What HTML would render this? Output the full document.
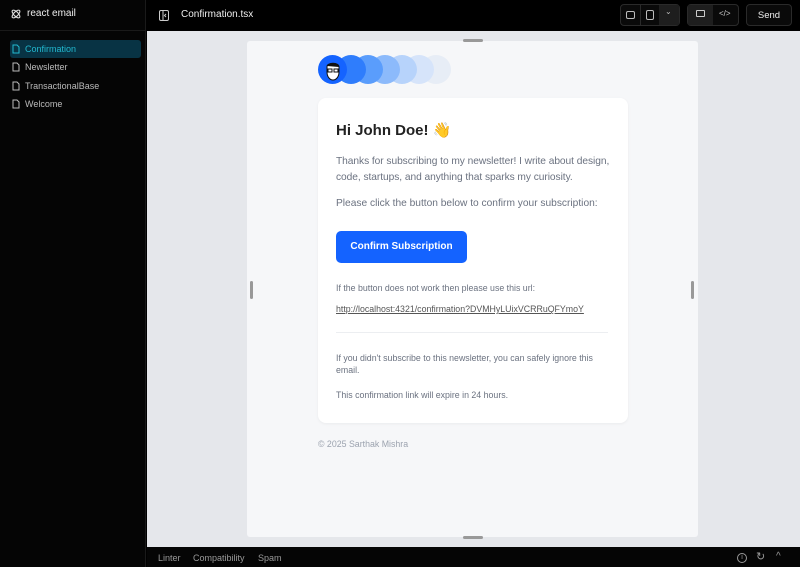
<!DOCTYPE html>
<html><head><meta charset="utf-8"><style>
*{margin:0;padding:0;box-sizing:border-box}
body{width:800px;height:567px;background:#000;font-family:"Liberation Sans",sans-serif;position:relative;overflow:hidden}
.a{position:absolute;white-space:nowrap}
.side{left:0;top:0;width:146px;height:567px;background:#050505;border-right:1px solid #1a1a1a}
.it{position:absolute;left:10px;width:131px;height:18px;font-size:9px;color:#bbb;line-height:18px;padding-left:15px}
.it svg{position:absolute;left:2px;top:4px}
.p{color:#6b7280;font-size:10.2px}
.btn{border:1px solid #2a2a2a;border-radius:4px}
</style></head><body>
<div class="a side"></div>
<div class="a" style="left:0;top:30px;width:146px;height:1px;background:#1a1a1a"></div>
<svg class="a" style="left:10px;top:8px" width="12" height="12" viewBox="0 0 12 12" fill="none" stroke="#ddd" stroke-width="1.1"><ellipse cx="6" cy="6" rx="5" ry="2.2" transform="rotate(45 6 6)"/><ellipse cx="6" cy="6" rx="5" ry="2.2" transform="rotate(-45 6 6)"/></svg>
<div class="a" style="left:27px;top:8px;font-size:10px;color:#eee">react email</div>
<div class="it" style="top:40px;background:#083344;border-radius:3px;color:#22b8cf"><svg width="8" height="10" viewBox="0 0 8 10" fill="none" stroke="#22b8cf"><path d="M1 1h4l2 2v6H1z"/></svg>Confirmation</div>
<div class="it" style="top:58px"><svg width="8" height="10" viewBox="0 0 8 10" fill="none" stroke="#bbb"><path d="M1 1h4l2 2v6H1z"/></svg>Newsletter</div>
<div class="it" style="top:77px"><svg width="8" height="10" viewBox="0 0 8 10" fill="none" stroke="#bbb"><path d="M1 1h4l2 2v6H1z"/></svg>TransactionalBase</div>
<div class="it" style="top:95px"><svg width="8" height="10" viewBox="0 0 8 10" fill="none" stroke="#bbb"><path d="M1 1h4l2 2v6H1z"/></svg>Welcome</div>
<svg class="a" style="left:159px;top:10px" width="10" height="11" viewBox="0 0 10 11" fill="none" stroke="#ccc"><rect x="0.5" y="0.5" width="9" height="10" rx="1.5"/><path d="M4 1v9M7 4l-1.5 1.5L7 7"/></svg>
<div class="a" style="left:181px;top:9px;font-size:10px;color:#eee">Confirmation.tsx</div>
<div class="a btn" style="left:620px;top:4px;width:60px;height:22px;background:#0a0a0a"></div>
<div class="a" style="left:659px;top:5px;width:20px;height:20px;background:#1e1e1e"></div>
<div class="a" style="left:640px;top:5px;width:1px;height:20px;background:#2a2a2a"></div>
<div class="a" style="left:626px;top:11px;width:9px;height:8px;border:1px solid #bbb;border-radius:2px"></div>
<div class="a" style="left:646px;top:10px;width:8px;height:10px;border:1px solid #bbb;border-radius:2px"></div>
<div class="a" style="left:665px;top:7px;font-size:8px;color:#bbb">⌄</div>
<div class="a btn" style="left:687px;top:4px;width:52px;height:22px;background:#0a0a0a"></div>
<div class="a" style="left:688px;top:5px;width:25px;height:20px;background:#1e1e1e"></div>
<div class="a" style="left:696px;top:10px;width:9px;height:7px;border:1px solid #ccc;border-radius:1px"></div>
<div class="a" style="left:719px;top:9px;font-size:8px;color:#ccc">&lt;/&gt;</div>
<div class="a btn" style="left:746px;top:4px;width:46px;height:22px;background:#0a0a0a;color:#eee;font-size:9.5px;text-align:center;line-height:21px">Send</div>
<div class="a" style="left:147px;top:31px;width:653px;height:516px;background:#e5e7eb"></div>
<div class="a" style="left:247px;top:41px;width:451px;height:496px;background:#f6f7f9;border-radius:3px"></div>
<div class="a" style="left:463px;top:39px;width:20px;height:3px;background:#999;border-radius:2px"></div>
<div class="a" style="left:463px;top:536px;width:20px;height:3px;background:#999;border-radius:2px"></div>
<div class="a" style="left:250px;top:281px;width:3px;height:18px;background:#999;border-radius:2px"></div>
<div class="a" style="left:691px;top:281px;width:3px;height:18px;background:#999;border-radius:2px"></div>
<div class="a" style="left:421px;top:55px;width:30px;height:29px;border-radius:50%;background:#e7edf6"></div>
<div class="a" style="left:404px;top:55px;width:30px;height:29px;border-radius:50%;background:#d6e4fa"></div>
<div class="a" style="left:387px;top:55px;width:30px;height:29px;border-radius:50%;background:#b7d3fb"></div>
<div class="a" style="left:370px;top:55px;width:30px;height:29px;border-radius:50%;background:#8cbafb"></div>
<div class="a" style="left:353px;top:55px;width:30px;height:29px;border-radius:50%;background:#5a9dfc"></div>
<div class="a" style="left:336px;top:55px;width:30px;height:29px;border-radius:50%;background:#2f7dfc"></div>
<div class="a" style="left:318px;top:55px;width:29px;height:29px;border-radius:50%;background:#1463ff"></div>
<svg class="a" style="left:322px;top:58px" width="22" height="24" viewBox="0 0 22 24" fill="#fff" stroke="#111" stroke-width="1"><path d="M5 9c0-5 12-5 12 0v5c0 5-3 8-6 8s-6-3-6-8z"/><path d="M5 8c1-3 11-4 12 1" fill="#111"/><rect x="6" y="11" width="4" height="3" fill="none"/><rect x="12" y="11" width="4" height="3" fill="none"/></svg>
<div class="a" style="left:318px;top:98px;width:310px;height:325px;background:#fff;border-radius:8px;box-shadow:0 1px 3px rgba(0,0,0,.05)"></div>
<div class="a" style="left:336px;top:121px;font-size:15px;font-weight:bold;color:#222">Hi John Doe! <span style="font-family:'DejaVu Sans',sans-serif;color:#f5b642;font-weight:normal">👋</span></div>
<div class="a p" style="left:336px;top:154px;line-height:16px;letter-spacing:-0.05px">Thanks for subscribing to my newsletter! I write about design,<br>code, startups, and anything that sparks my curiosity.</div>
<div class="a p" style="left:336px;top:198px">Please click the button below to confirm your subscription:</div>
<div class="a" style="left:336px;top:231px;width:131px;height:32px;background:#1463ff;border-radius:5px;color:#fff;font-size:10px;font-weight:bold;text-align:center;line-height:32px">Confirm Subscription</div>
<div class="a p" style="left:336px;top:283px;font-size:8.8px">If the button does not work then please use this url:</div>
<div class="a p" style="left:336px;top:304px;font-size:8.8px;text-decoration:underline;color:#555">http://localhost:4321/confirmation?DVMHyLUixVCRRuQFYmoY</div>
<div class="a" style="left:336px;top:332px;width:272px;height:1px;background:#eceef1"></div>
<div class="a p" style="left:336px;top:352px;font-size:8.8px;line-height:12px">If you didn't subscribe to this newsletter, you can safely ignore this<br>email.</div>
<div class="a p" style="left:336px;top:390px;font-size:8.8px">This confirmation link will expire in 24 hours.</div>
<div class="a" style="left:318px;top:439px;font-size:8.8px;color:#9ca3af">© 2025 Sarthak Mishra</div>
<div class="a" style="left:147px;top:547px;width:653px;height:20px;background:#050505"></div>
<div class="a" style="left:158px;top:553px;font-size:9px;color:#999">Linter</div>
<div class="a" style="left:193px;top:553px;font-size:9px;color:#999">Compatibility</div>
<div class="a" style="left:258px;top:553px;font-size:9px;color:#999">Spam</div>
<div class="a" style="left:737px;top:553px;width:10px;height:10px;border:1px solid #999;border-radius:50%;font-size:7px;color:#999;text-align:center;line-height:8px">i</div>
<div class="a" style="left:756px;top:550px;font-size:11px;color:#999">↻</div>
<div class="a" style="left:776px;top:551px;font-size:10px;color:#999">^</div>
</body></html>
